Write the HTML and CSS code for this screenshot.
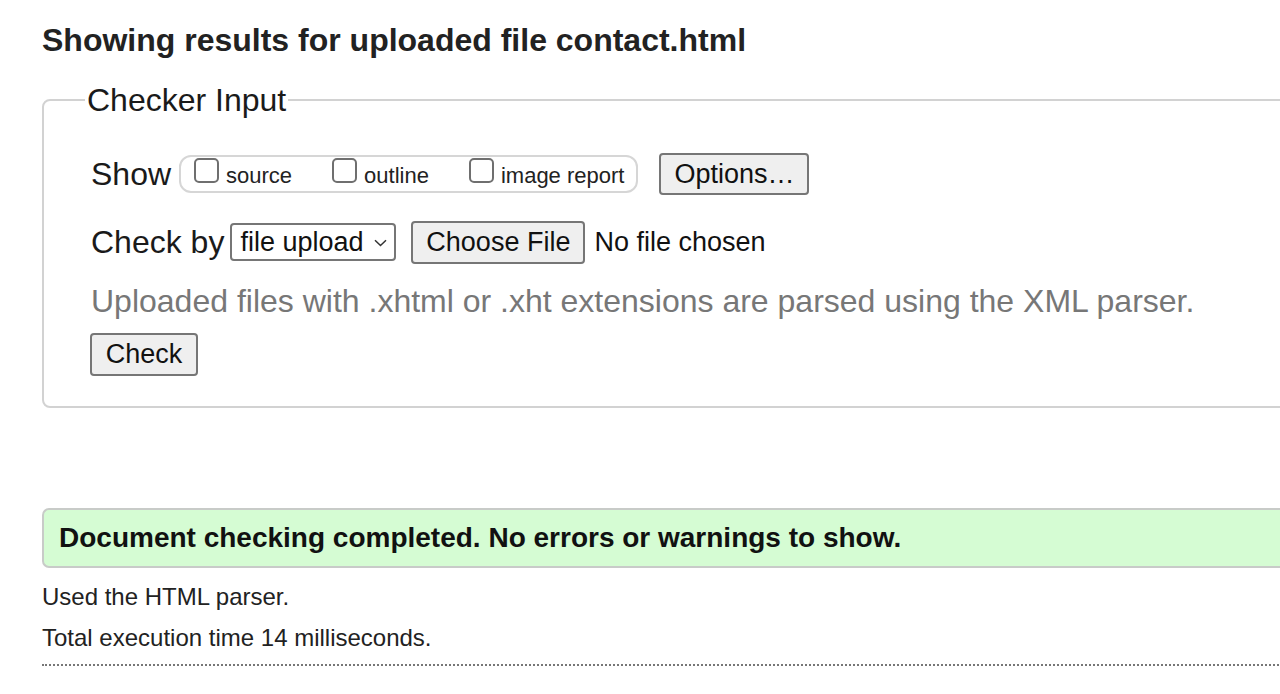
FILE: index.html
```html
<!DOCTYPE html>
<html lang="en">
<head>
<meta charset="utf-8">
<title>Showing results for contact.html</title>
<link rel="stylesheet" href="styles.css">
</head>
<body>
<main class="page">
  <h2 class="title">Showing results for uploaded file contact.html</h2>
  <fieldset class="checker">
    <legend class="legend">Checker Input</legend>
    <div class="row row-show">
      <span class="row-label">Show</span>
      <span class="show-group">
        <label class="opt"><span class="box"></span>source</label>
        <label class="opt"><span class="box"></span>outline</label>
        <label class="opt"><span class="box"></span>image report</label>
      </span>
      <span class="btn btn-options">Options…</span>
    </div>
    <div class="row row-check">
      <span class="row-label">Check by</span>
      <span class="select">file upload<svg class="chev" width="13" height="8" viewBox="0 0 13 8"><path d="M1 1.2 L6.5 6.5 L12 1.2" fill="none" stroke="#333" stroke-width="1.5"/></svg></span>
      <span class="btn btn-file">Choose File</span>
      <span class="nofile">No file chosen</span>
    </div>
    <p class="hint">Uploaded files with .xhtml or .xht extensions are parsed using the XML parser.</p>
    <span class="btn btn-check">Check</span>
  </fieldset>
  <div class="success">Document checking completed. No errors or warnings to show.</div>
  <p class="info">Used the HTML parser.</p>
  <p class="info">Total execution time 14 milliseconds.</p>
  <div class="rule"></div>
</main>
</body>
</html>
```
FILE: styles.css
```css
html, body {
  margin: 0;
  padding: 0;
  background: #fff;
  overflow: hidden;
}
body {
  font-family: "Liberation Sans", Arial, sans-serif;
  color: #1a1a1a;
}
.page {
  padding: 0 0 0 42px;
  width: 1300px;
}
.title {
  margin: 0;
  padding-top: 22px;
  font-size: 32px;
  line-height: 37px;
  font-weight: bold;
  color: #222;
}
.checker {
  margin: 23px 0 0 0;
  padding: 0 0 30px 47px;
  border: 2px solid #d2d2d2;
  border-radius: 8px;
  min-inline-size: 0;
}
.legend {
  margin-left: -6px;
  padding: 0 2px;
  font-size: 32px;
  line-height: 36px;
  color: #1a1a1a;
}
.row {
  display: flex;
  align-items: center;
}
.row-label {
  font-size: 32px;
  margin-right: 8px;
  white-space: nowrap;
}
.row-show {
  margin-top: 35px;
  height: 42px;
}
.show-group {
  display: flex;
  align-items: center;
  height: 34px;
  border: 2px solid #d6d6d6;
  border-radius: 12px;
  padding: 0 12px 0 13px;
  margin-right: 21px;
}
.opt {
  display: flex;
  align-items: center;
  font-size: 22px;
  color: #222;
  margin-right: 40px;
  padding-top: 4px;
  white-space: nowrap;
}
.opt:last-child {
  margin-right: 0;
}
.box {
  width: 21px;
  height: 21px;
  border: 2px solid #6f6f6f;
  border-radius: 5px;
  background: #fff;
  margin-right: 7px;
  margin-top: -12px;
}
.btn {
  display: inline-flex;
  align-items: center;
  justify-content: center;
  box-sizing: border-box;
  background: #efefef;
  border: 2px solid #767676;
  border-radius: 4px;
  color: #111;
  font-size: 27px;
  white-space: nowrap;
}
.btn-options {
  width: 150px;
  height: 42px;
}
.row-check {
  margin-top: 26px;
  height: 42px;
}
.select {
  display: inline-flex;
  align-items: center;
  box-sizing: border-box;
  height: 38px;
  width: 166px;
  border: 2px solid #767676;
  border-radius: 4px;
  padding: 0 6px 0 8px;
  margin-left: -2px;
  font-size: 27px;
  color: #111;
  margin-right: 15px;
  white-space: nowrap;
}
.chev {
  margin-left: 10px;
  margin-top: 2px;
  flex: none;
}
.btn-file {
  width: 174px;
  height: 43px;
}
.nofile {
  font-size: 27px;
  color: #111;
  margin-left: 9px;
  white-space: nowrap;
}
.hint {
  margin: 18px 0 0 0;
  font-size: 32px;
  line-height: 40px;
  color: #777;
}
.btn-check {
  margin-top: 12px;
  margin-left: -1px;
  width: 108px;
  height: 43px;
}
.success {
  margin-top: 100px;
  box-sizing: border-box;
  height: 60px;
  display: flex;
  align-items: center;
  padding-left: 15px;
  background: #d5fcd3;
  border: 2px solid #c8cbc8;
  border-right: none;
  border-radius: 7px 0 0 7px;
  font-size: 28px;
  font-weight: bold;
  color: #111;
}
.info {
  margin: 0;
  font-size: 24px;
  line-height: 41px;
  color: #222;
}
.success + .info {
  margin-top: 8px;
}
.rule {
  margin-top: 6px;
  border-top: 2px dotted #777;
  width: 1260px;
}
```
